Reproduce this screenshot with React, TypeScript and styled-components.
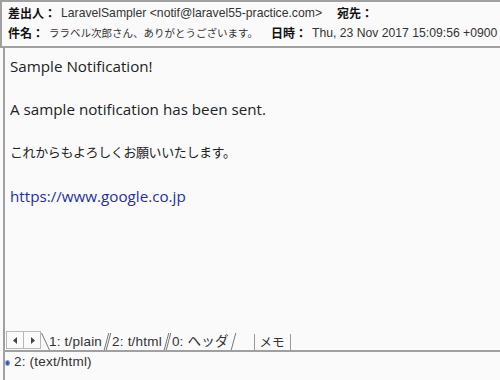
import styled, { createGlobalStyle } from "styled-components";

const Global = createGlobalStyle`
  html, body { margin: 0; padding: 0; background: #fafafa; }
  body { width: 500px; height: 380px; overflow: hidden; }
`;

const Window = styled.div`
  width: 500px;
  height: 380px;
  display: flex;
  flex-direction: column;
  background: #fafafa;
  font-family: "Noto Sans CJK JP", "DejaVu Sans", sans-serif;
  color: #222;
`;

const Header = styled.div`
  border-top: 2px solid #a0a0a0;
  border-left: 2px solid #a0a0a0;
  border-bottom: 2px solid #a0a0a0;
  padding: 1px 0 4px 6px;
  display: flex;
  flex-direction: column;
  gap: 1px;
`;

const HeaderRow = styled.div`
  display: flex;
  align-items: center;
  height: 19px;
  white-space: nowrap;
`;

const Label = styled.span<{ $gap?: number }>`
  font-weight: bold;
  font-size: 12px;
  margin-left: ${(p) => p.$gap ?? 0}px;
  margin-right: 5px;
  color: #111;
`;

const Value = styled.span`
  color: #333;
  font-family: "Liberation Sans", "Noto Sans CJK JP", sans-serif;
  font-size: 12.2px;
`;

const JaValue = styled.span`
  color: #333;
  font-size: 10.5px;
`;

const Body = styled.div`
  flex: 1;
  margin-left: 3px;
  border-left: 2px solid #a0a0a0;
  padding: 7px 0 0 5px;
  display: flex;
  flex-direction: column;
`;

const Para = styled.p<{ $link?: boolean }>`
  margin: 0 0 21px 0;
  font-family: "Open Sans", "Noto Sans CJK JP", sans-serif;
  font-size: 15.2px;
  line-height: 22px;
  color: ${(p) => (p.$link ? "#1f2fa0" : "#222")};
`;

const JaPara = styled(Para)`
  font-family: "Noto Sans CJK JP", sans-serif;
  font-size: 13px;
  letter-spacing: -0.4px;
  margin-bottom: 22px;
`;

const Spacer = styled.div`
  flex: 1;
`;

const TabBar = styled.div`
  display: flex;
  align-items: flex-end;
  height: 19px;
  border-bottom: 2px solid #a0a0a0;
  margin-left: -5px;
  padding-left: 1px;
`;

const ArrowBox = styled.div`
  display: flex;
  height: 16px;
  border: 1px solid #b8b8b8;
  margin-bottom: 1px;
`;

const Arrow = styled.div`
  width: 16px;
  display: flex;
  align-items: center;
  justify-content: center;
  & + & { border-left: 1px solid #b8b8b8; }
`;

const Tab = styled.div<{ $active?: boolean }>`
  position: relative;
  height: 17px;
  padding: 0 7px 0 6px;
  margin-left: ${(p) => (p.$active ? 2 : -3)}px;
  font-size: 13.5px;
  letter-spacing: 0.2px;
  line-height: 17px;
  color: #333;
  white-space: nowrap;
  font-family: "Liberation Sans", "Noto Sans CJK JP", sans-serif;
  &::before, &::after {
    content: "";
    position: absolute;
    top: 0;
    bottom: 0;
    width: 1px;
    background: #777;
  }
  &::before { left: 2px; transform: skewX(${(p) => (p.$active ? 25 : -15)}deg); }
  &::after { right: 2px; transform: skewX(-15deg); }
`;

const MemoTab = styled.div`
  margin-left: 18px;
  height: 16px;
  padding: 0 5px;
  border-left: 1px solid #999;
  border-right: 1px solid #999;
  font-size: 12.5px;
  line-height: 16px;
  color: #333;
`;

const Status = styled.div`
  height: 28px;
  display: flex;
  align-items: flex-start;
  gap: 4px;
  margin-left: -5px;
  padding: 2px 0 0 0;
  box-sizing: border-box;
  font-size: 13.5px;
  letter-spacing: 0.2px;
  color: #333;
  font-family: "Liberation Sans", sans-serif;
`;

const Dot = styled.span`
  width: 3px;
  height: 4px;
  margin-top: 6px;
  border-radius: 50%;
  background: #3050c0;
  border: 1px solid #90a0e0;
`;

export default function App() {
  return (
    <>
      <Global />
      <Window>
        <Header>
          <HeaderRow>
            <Label>差出人：</Label>
            <Value>LaravelSampler &lt;notif@laravel55-practice.com&gt;</Value>
            <Label $gap={15}>宛先：</Label>
          </HeaderRow>
          <HeaderRow>
            <Label>件名：</Label>
            <JaValue>ララベル次郎さん、ありがとうございます。</JaValue>
            <Label $gap={13}>日時：</Label>
            <Value>Thu, 23 Nov 2017 15:09:56 +0900</Value>
          </HeaderRow>
        </Header>
        <Body>
          <Para>Sample Notification!</Para>
          <Para>A sample notification has been sent.</Para>
          <JaPara>これからもよろしくお願いいたします。</JaPara>
          <Para $link>https://www.google.co.jp</Para>
          <Spacer />
          <TabBar>
            <ArrowBox>
              <Arrow>
                <svg width="5" height="7" viewBox="0 0 5 7"><path d="M4 0 L0 3.5 L4 7 Z" fill="#444" /></svg>
              </Arrow>
              <Arrow>
                <svg width="5" height="7" viewBox="0 0 5 7"><path d="M1 0 L5 3.5 L1 7 Z" fill="#444" /></svg>
              </Arrow>
            </ArrowBox>
            <Tab $active>1: t/plain</Tab>
            <Tab>2: t/html</Tab>
            <Tab>0: ヘッダ</Tab>
            <MemoTab>メモ</MemoTab>
          </TabBar>
          <Status>
            <Dot />
            2: (text/html)
          </Status>
        </Body>
      </Window>
    </>
  );
}
